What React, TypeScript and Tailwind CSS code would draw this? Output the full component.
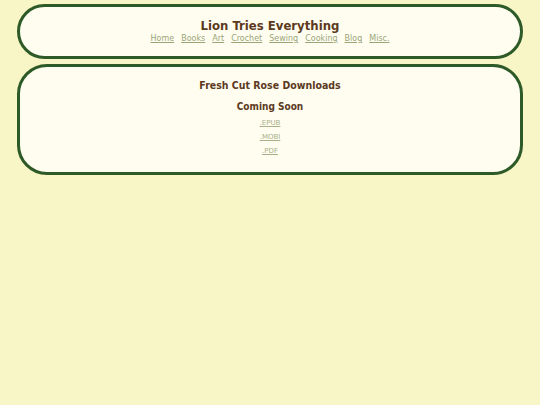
import React from "react";

const font = { fontFamily: '"DejaVu Sans", Verdana, sans-serif' };
const cond = { fontFamily: '"DejaVu Sans Condensed", "DejaVu Sans", Verdana, sans-serif' };

export default function App() {
  const nav = ["Home", "Books", "Art", "Crochet", "Sewing", "Cooking", "Blog", "Misc."];
  return (
    <div className="min-h-[405px] w-[540px] bg-[#f8f5c6] px-[17px] pt-[4px]" style={font}>
      <div className="flex h-[55px] flex-col items-center rounded-[28px] border-[3px] border-[#2d5a27] bg-[#fffdf0] pt-[11px]">
        <h1 className="text-[13px] font-bold leading-[15px] text-[#5c3a1e]" style={cond}>Lion Tries Everything</h1>
        <nav className="mt-[0px] flex gap-[7px] text-[8px] leading-[11px]">
          {nav.map((n) => (
            <a key={n} href="#" className="text-[#9aa57a] underline">{n}</a>
          ))}
        </nav>
      </div>
      <div className="mt-[5px] flex h-[111px] flex-col items-center rounded-[30px] border-[3px] border-[#2d5a27] bg-[#fffdf0] pt-[11px]">
        <h2 className="text-[10.5px] font-bold leading-[14px] text-[#5c3a1e]" style={cond}>Fresh Cut Rose Downloads</h2>
        <h3 className="mt-[8px] text-[10px] font-bold leading-[13px] text-[#5c3a1e]" style={cond}>Coming Soon</h3>
        <div className="mt-[6px] flex flex-col items-center gap-[5px] text-[7px] leading-[9px]">
          <a href="#" className="text-[#a8b08a] underline">.EPUB</a>
          <a href="#" className="text-[#a8b08a] underline">.MOBI</a>
          <a href="#" className="text-[#a8b08a] underline">.PDF</a>
        </div>
      </div>
    </div>
  );
}
